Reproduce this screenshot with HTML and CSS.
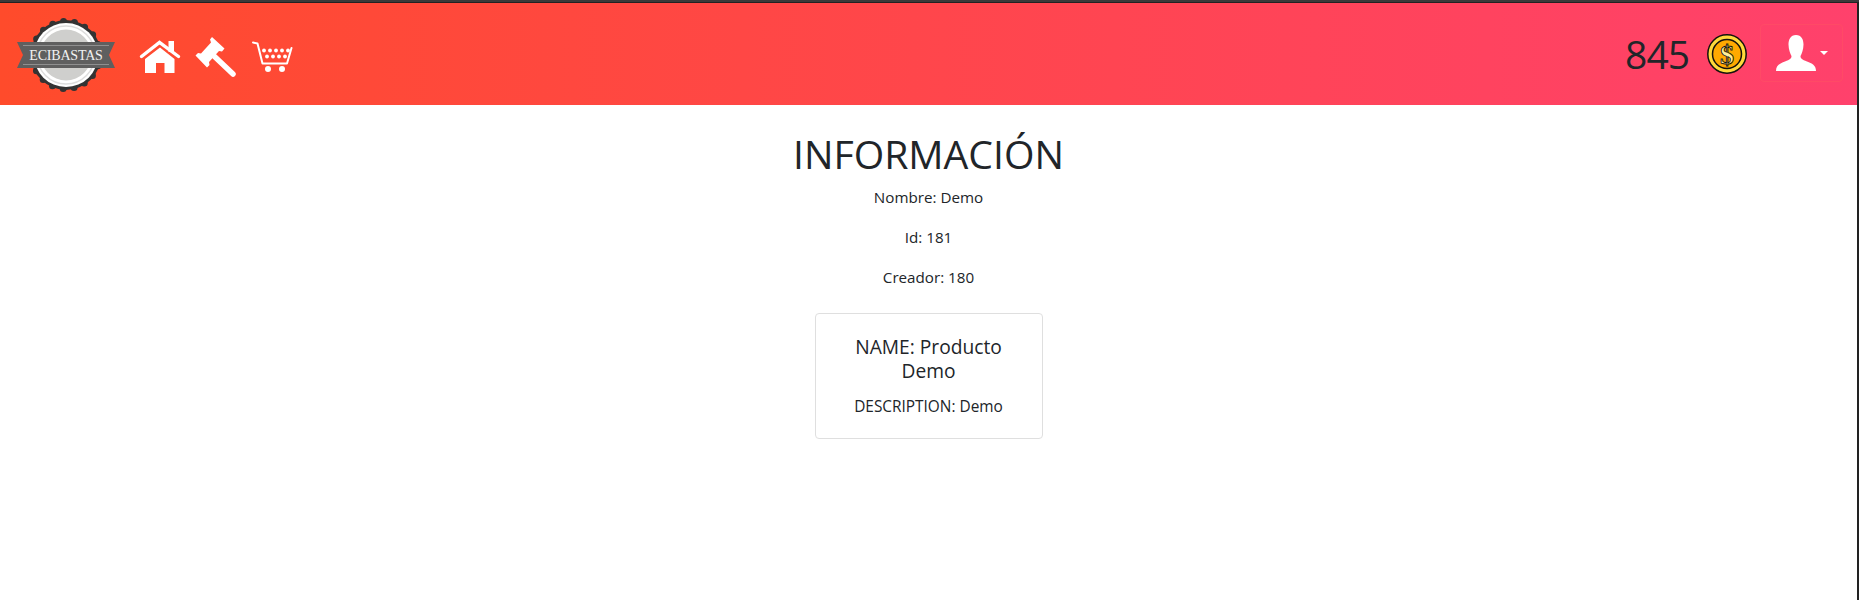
FILE: index.html
```html
<!DOCTYPE html>
<html lang="es">
<head>
<meta charset="utf-8">
<title>Ecibastas</title>
<link rel="stylesheet" href="styles.css">
</head>
<body>
<div class="topline"></div>
<div class="frame">
  <div class="page">
    <header class="navbar">
      <a class="logo" href="#">
        <svg width="100" height="80" viewBox="0 0 100 80">
          <circle cx="50" cy="41" r="35" fill="#333"/>
          <circle cx="50" cy="41" r="33.5" fill="none" stroke="#333" stroke-width="7" stroke-linecap="round" stroke-dasharray="0 11.08"/>
          <circle cx="50" cy="41" r="32" fill="#fff"/>
          <circle cx="50" cy="41" r="29" fill="none" stroke="#ddd" stroke-width="1.5"/>
          <circle cx="50" cy="41" r="25.5" fill="#cfcfcd"/>
          <polygon points="1,28 99,28 93,41 99,54 1,54 7,41" fill="#5f5f5f"/>
          <path d="M7 31.5H93M7 50.5H93" stroke="#8f8f8f" stroke-width="1" fill="none"/>
          <text class="logo-text" x="50" y="46" text-anchor="middle">ECIBASTAS</text>
        </svg>
      </a>
      <nav class="nav-icons">
        <a href="#" class="nav-icon">
          <svg width="40" height="40" viewBox="0 -3 40 40" fill="#fff">
            <rect x="28.500" y="4" width="5.500" height="11"/>
            <path d="M1.500 19.500L19.500 5.500L38.500 19.500" fill="none" stroke="#fff" stroke-width="3.400" stroke-linecap="round"/>
            <path d="M20 10.500L34.500 22V36H24.500V26H16V36H5V22Z"/>
          </svg>
        </a>
        <a href="#" class="nav-icon">
          <svg width="40" height="40" viewBox="0 -3 40 40" fill="#fff">
            <path d="M16 0L28.500 11.500L26 14.500L23 14L13 25L13.500 28L11 30.500L-.5 18.500L2 16L5 16.500L15 5.500L14 2.500Z"/>
            <path d="M18.500 19.500L37 37" stroke="#fff" stroke-width="5.500" stroke-linecap="round"/>
          </svg>
        </a>
        <a href="#" class="nav-icon">
          <svg width="40" height="40" viewBox="0 -3 40 40" fill="#fff">
            <path d="M1 5.500L5.500 6.500L10.500 26.500H35L39.500 11" fill="none" stroke="#fff" stroke-width="2" stroke-linecap="round" stroke-linejoin="round"/>
            <circle cx="16" cy="32" r="3"/><circle cx="30" cy="32" r="3"/>
            <circle cx="12" cy="13.500" r="1.900"/><circle cx="18" cy="13.500" r="1.900"/><circle cx="24" cy="13.500" r="1.900"/><circle cx="30" cy="13.500" r="1.900"/><circle cx="36" cy="13.500" r="1.900"/>
            <circle cx="15" cy="19.500" r="1.900"/><circle cx="21" cy="19.500" r="1.900"/><circle cx="27" cy="19.500" r="1.900"/><circle cx="33" cy="19.500" r="1.900"/>
          </svg>
        </a>
      </nav>
      <div class="account">
        <span class="balance">845</span>
        <svg class="coin" width="40" height="40" viewBox="0 0 40 40">
          <circle cx="20" cy="20" r="19.200" fill="#ffd93b" stroke="#15130c" stroke-width="1.500"/>
          <circle cx="20" cy="20" r="14.500" fill="#ffa900" stroke="#15130c" stroke-width="1.500"/>
          <text class="coin-text" x="20" y="29.500" text-anchor="middle">$</text>
        </svg>
        <button class="user-btn" type="button">
          <svg width="40" height="36" viewBox="0 0 40 36" fill="#fff">
            <path d="M20 0C25.500 0 27.500 4.500 27.500 9.500C27.500 15 25.500 19 24.500 21C24.500 23.500 26 24.500 31 26.500C36 28.500 40 30 40 36H0C0 30 4 28.500 9 26.500C14 24.500 15.500 23.500 15.500 21C14.500 19 12.500 15 12.500 9.500C12.500 4.500 14.500 0 20 0Z"/>
          </svg>
          <span class="caret"></span>
        </button>
      </div>
    </header>
    <main class="content">
      <h1 class="title">INFORMACIÓN</h1>
      <p class="line">Nombre: Demo</p>
      <p class="line">Id: 181</p>
      <p class="line">Creador: 180</p>
      <article class="card">
        <h5 class="card-title">NAME: Producto Demo</h5>
        <p class="card-text">DESCRIPTION: Demo</p>
      </article>
    </main>
  </div>
  <div class="edge"></div>
</div>
</body>
</html>
```
FILE: styles.css
```css
* { box-sizing: border-box; }
html, body { height: 100%; }
body {
  margin: 0;
  display: flex;
  flex-direction: column;
  background: #fff;
  color: #212529;
  font-family: "Open Sans", "Noto Sans", sans-serif;
  font-size: 15.2px;
  line-height: 24px;
  overflow: hidden;
}
.topline {
  height: 3px;
  flex: none;
  background: #3a3a3a;
  border-bottom: 1px solid #222;
}
.frame { flex: 1; display: flex; min-height: 0; }
.page { flex: 1; min-width: 0; }
.edge { width: 2px; flex: none; background: #222; }

.navbar {
  height: 102px;
  display: flex;
  align-items: center;
  padding: 0 14px 0 16px;
  background: linear-gradient(to right, #ff4b2b, #ff416c);
}
.logo { display: flex; }
.logo-text {
  font-family: "Liberation Serif", serif;
  font-size: 14px;
  letter-spacing: -.2px;
  fill: #f2f2f2;
}
.nav-icons { display: flex; gap: 16px; margin-left: 24px; }
.nav-icon { display: flex; }
.nav-icon svg { overflow: visible; }

.account { display: flex; align-items: center; margin-left: auto; }
.balance {
  font-size: 39px;
  line-height: 48px;
  letter-spacing: -1px;
  margin-right: 18px;
}
.coin { display: block; margin-right: 13px; }
.user-btn {
  width: 83px;
  height: 58px;
  margin-bottom: 2px;
  padding: 0 0 0 15px;
  display: flex;
  align-items: center;
  gap: 4px;
  background: transparent;
  border: 1px solid #ff4a66;
  border-radius: 4px;
}
.caret {
  width: 0;
  height: 0;
  border-left: 4px solid transparent;
  border-right: 4px solid transparent;
  border-top: 4px solid #fff;
}

.content {
  padding-top: 24px;
  display: flex;
  flex-direction: column;
  align-items: center;
  text-align: center;
}
.title {
  margin: 0 0 8px;
  font-size: 39.2px;
  line-height: 50px;
  height: 48px;
  font-weight: 400;
}
.line { margin: 0 0 16px; }
.card {
  width: 228px;
  margin-top: 8px;
  padding: 21px 20px 19px;
  border: 1px solid #dfdfdf;
  border-radius: 4px;
}
.card-title {
  margin: 0 0 12px;
  font-size: 19.200px;
  line-height: 24px;
  font-weight: 400;
}
.card-text { margin: 0; font-size: 15.400px; }
.coin-text {
  font-family: "Liberation Serif", serif;
  font-size: 28px;
  font-weight: 700;
  fill: #fff09a;
  stroke: #15130c;
  stroke-width: .9;
}
```
